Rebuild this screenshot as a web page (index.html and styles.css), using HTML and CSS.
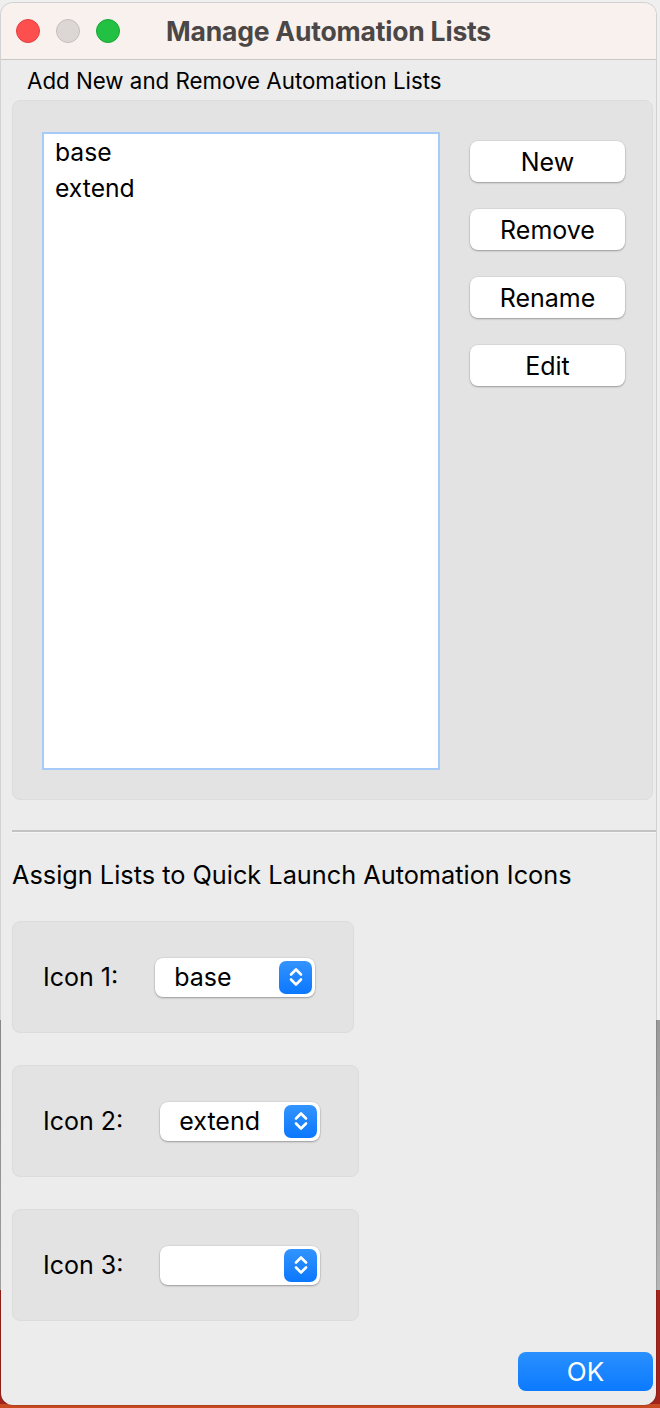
FILE: index.html
```html
<!DOCTYPE html>
<html lang="en">
<head>
  <meta charset="UTF-8">
  <meta name="viewport" content="width=device-width, initial-scale=1.0">
  <title>Manage Automation Lists</title>
  <link rel="stylesheet" href="styles.css">
</head>
<body>
  <div class="window">
    <div class="titlebar">
      <div class="lights">
        <span class="light red"></span>
        <span class="light grey"></span>
        <span class="light green"></span>
      </div>
      <div class="title">Manage Automation Lists</div>
      <div></div>
    </div>

    <div class="content">
      <div class="section-label">Add New and Remove Automation Lists</div>
      <div class="group lists-group">
        <div class="listbox">
          <div class="list-item">base</div>
          <div class="list-item">extend</div>
        </div>
        <div class="actions">
          <button class="btn">New</button>
          <button class="btn">Remove</button>
          <button class="btn">Rename</button>
          <button class="btn">Edit</button>
        </div>
      </div>
    </div>

    <div class="separator"></div>

    <div class="content">
      <div class="section-label big">Assign Lists to Quick Launch Automation Icons</div>

      <div class="group icon-group">
        <span class="icon-label">Icon 1:</span>
        <div class="popup">
          <span class="popup-value">base</span>
          <span class="stepper">
            <svg width="16" height="24" viewBox="0 0 16 24"><path d="M3 9.5 L8 4.5 L13 9.5 M3 14.5 L8 19.5 L13 14.5" fill="none" stroke="#fff" stroke-width="2.6" stroke-linecap="round" stroke-linejoin="round"/></svg>
          </span>
        </div>
      </div>

      <div class="group icon-group">
        <span class="icon-label">Icon 2:</span>
        <div class="popup">
          <span class="popup-value">extend</span>
          <span class="stepper">
            <svg width="16" height="24" viewBox="0 0 16 24"><path d="M3 9.5 L8 4.5 L13 9.5 M3 14.5 L8 19.5 L13 14.5" fill="none" stroke="#fff" stroke-width="2.6" stroke-linecap="round" stroke-linejoin="round"/></svg>
          </span>
        </div>
      </div>

      <div class="group icon-group">
        <span class="icon-label">Icon 3:</span>
        <div class="popup">
          <span class="popup-value"></span>
          <span class="stepper">
            <svg width="16" height="24" viewBox="0 0 16 24"><path d="M3 9.5 L8 4.5 L13 9.5 M3 14.5 L8 19.5 L13 14.5" fill="none" stroke="#fff" stroke-width="2.6" stroke-linecap="round" stroke-linejoin="round"/></svg>
          </span>
        </div>
      </div>

      <div class="footer">
        <button class="btn-ok">OK</button>
      </div>
    </div>
  </div>
</body>
</html>
```

FILE: styles.css
```css
html, body {
  margin: 0;
  padding: 0;
}
body {
  font-family: Inter, "Noto Sans", sans-serif;
  background: linear-gradient(to bottom, #efefef 0, #efefef 1020px, #9a9a9a 1020px, #b5b5b5 1290px, #a3241a 1290px, #a3241a 1404px, #c84a20 1404px);
  width: 660px;
  height: 1408px;
  overflow: hidden;
  color: #000;
}
.window {
  margin: 3px 0 0 1px;
  width: 655px;
  height: 1402px;
  background: #ececec;
  border-radius: 12px;
  box-shadow: 0 0 0 1px rgba(0,0,0,0.12);
  overflow: hidden;
  display: flex;
  flex-direction: column;
}
.titlebar {
  height: 56px;
  background: #f9f1ee;
  border-bottom: 1px solid #c9c6c4;
  display: grid;
  grid-template-columns: 1fr auto 1fr;
  align-items: center;
  flex-shrink: 0;
}
.lights {
  display: flex;
  gap: 16px;
  padding-left: 15px;
}
.light {
  width: 24px;
  height: 24px;
  border-radius: 50%;
  box-sizing: border-box;
}
.light.red {
  background: #fe4f4f;
  border: 1px solid #e2403f;
}
.light.grey {
  background: #dcd6d4;
  border: 1px solid #c6bfbd;
}
.light.green {
  background: #22c144;
  border: 1px solid #1aa637;
}
.title {
  font-size: 26.5px;
  font-weight: 700;
  color: #4b4746;
  letter-spacing: -0.2px;
}
.content {
  padding: 0 3px 0 11px;
}
.section-label {
  font-size: 22.3px;
  line-height: 26px;
  margin: 8px 0 6px 15px;
}
.section-label.big {
  font-size: 25.3px;
  line-height: 30px;
  margin: 27px 0 31px 0;
}
.group {
  background: #e3e3e3;
  border: 1px solid #dcdcdc;
  border-radius: 8px;
  box-sizing: border-box;
}
.lists-group {
  height: 700px;
  display: flex;
  padding: 31px 0 0 29px;
  gap: 30px;
}
.listbox {
  width: 398px;
  height: 638px;
  background: #fff;
  border: 2px solid #a6cbf8;
  box-sizing: border-box;
  padding: 0 0 0 11px;
}
.list-item {
  font-size: 24.7px;
  line-height: 36px;
}
.actions {
  display: flex;
  flex-direction: column;
  gap: 27px;
  padding-top: 9px;
}
.btn {
  width: 155px;
  height: 41px;
  background: #fff;
  border: none;
  border-radius: 8px;
  box-shadow: 0 1px 2px rgba(0,0,0,0.3), 0 0 0 0.5px rgba(0,0,0,0.08);
  font-family: Inter, "Noto Sans", sans-serif;
  font-size: 25px;
  color: #000;
  padding: 0;
}
.separator {
  margin: 30px 0 0 11px;
  height: 2px;
  background: #c3c3c3;
  border-bottom: 1px solid #f5f5f5;
}
.icon-group {
  width: fit-content;
  height: 112px;
  display: flex;
  align-items: center;
  padding: 0 38px 0 30px;
  gap: 37px;
  margin-bottom: 32px;
}
.icon-label {
  font-size: 25px;
  white-space: nowrap;
}
.popup {
  width: 160px;
  height: 39px;
  background: #fff;
  border-radius: 8px;
  box-shadow: 0 1px 2px rgba(0,0,0,0.3), 0 0 0 0.5px rgba(0,0,0,0.08);
  display: flex;
  align-items: center;
  justify-content: space-between;
  padding: 0 3px 0 19px;
  box-sizing: border-box;
}
.popup-value {
  font-size: 25px;
}
.stepper {
  width: 33px;
  height: 33px;
  border-radius: 7px;
  background: linear-gradient(to bottom, #3394ff, #0a77fe);
  display: flex;
  align-items: center;
  justify-content: center;
}
.footer {
  display: flex;
  justify-content: flex-end;
  margin-top: -1px;
}
.btn-ok {
  width: 135px;
  height: 39px;
  border: none;
  border-radius: 8px;
  background: linear-gradient(to bottom, #2a90ff, #0b7afe);
  color: #fff;
  font-family: Inter, "Noto Sans", sans-serif;
  font-size: 26px;
  padding: 0;
}
```
